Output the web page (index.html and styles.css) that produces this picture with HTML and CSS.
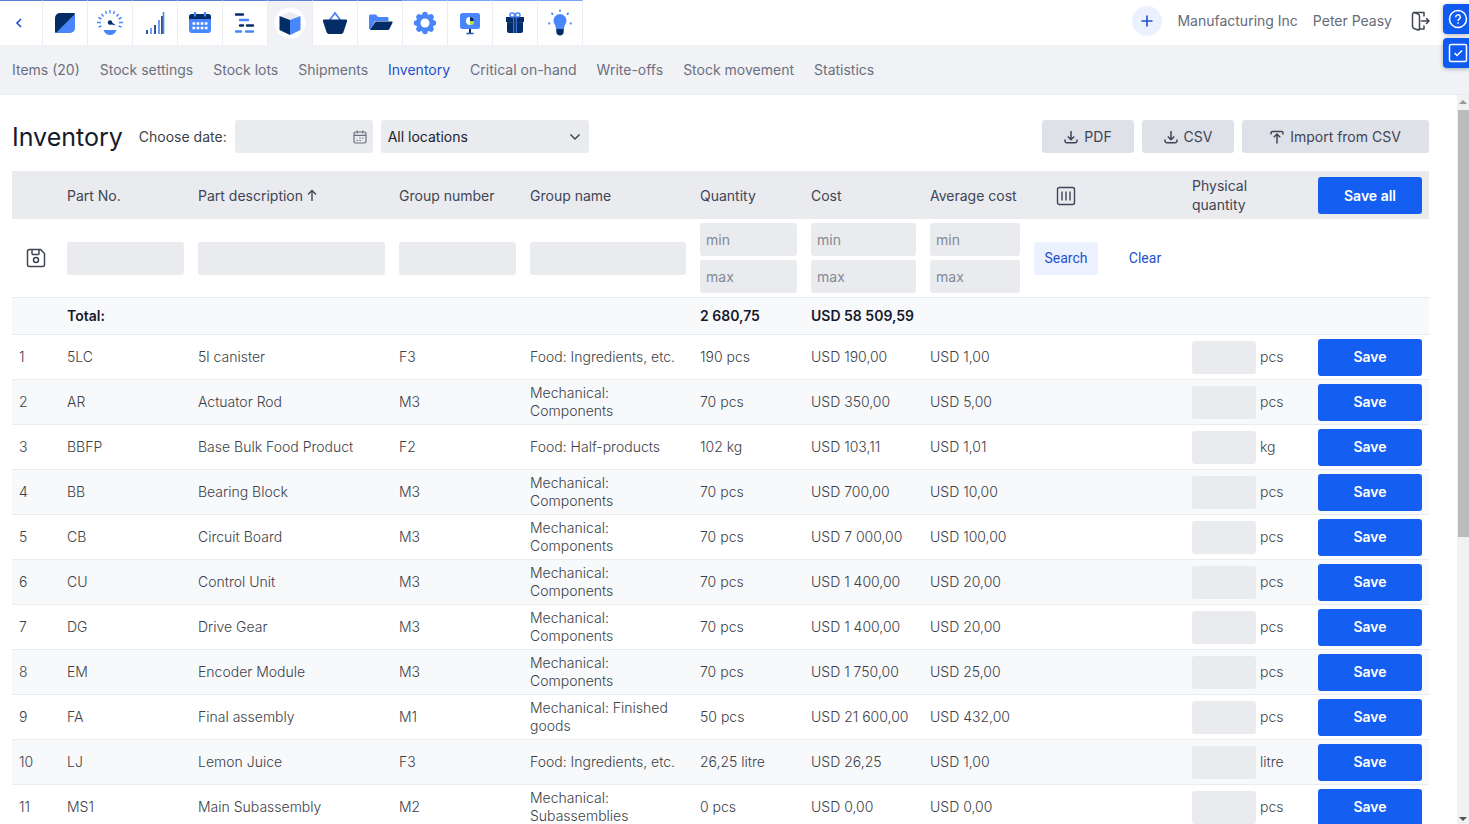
FILE: index.html
```html
<!DOCTYPE html>
<html lang="en">
<head>
<meta charset="utf-8">
<title>Inventory</title>
<link rel="stylesheet" href="styles.css">
</head>
<body>
<header class="topbar">
  <nav class="modules" aria-label="Modules">
    <a class="module back" href="#" aria-label="Back"><svg width="20" height="20" viewBox="0 0 20 20" fill="none" stroke="#1f4fd0" stroke-width="1.6"><path d="M12 6l-4 4 4 4"/></svg></a>
    <a class="module" href="#" aria-label="Dashboard"><svg width="26" height="26" viewBox="0 0 26 26"><path d="M8 3h13.500c1 0 1.500.5 1.500 1.500L4.500 23C3.500 23 3 22.500 3 21.500V8a5 5 0 0 1 5-5z" fill="#042c66"/><path d="M23 4v14a5 5 0 0 1-5 5H4z" fill="#4a86fb"/></svg></a>
    <a class="module" href="#" aria-label="Performance"><svg width="28" height="28" viewBox="0 0 28 28"><g stroke="#4a86fb" stroke-width="1.4"><path d="M14 1v3.500M9.500 2l1 3M18.500 2l-1 3M5.500 5l2 2.500M22.500 5l-2 2.500M2.500 8.500l3 1.500M25.500 8.500l-3 1.500M1 13.500h4M27 13.500h-4M2.500 18l3-1M25.500 18l-3-1"/></g><circle cx="14" cy="13.500" r="2.200" fill="#042c66"/><path d="M14 12l6 4.500-6.500-1.500z" fill="#042c66"/><path d="M7.500 21h13c-1 3-3.500 5-6.500 5s-5.500-2-6.500-5z" fill="#4a86fb"/></svg></a>
    <a class="module" href="#" aria-label="Sales"><svg width="24" height="26" viewBox="0 0 24 26"><g stroke-width="1.600"><path d="M4 20v4M12 15v9M19 6v18" stroke="#042c66"/><path d="M8 18v6M16 10v14M20.500 2v22" stroke="#4a86fb"/></g></svg></a>
    <a class="module" href="#" aria-label="Calendar"><svg width="26" height="26" viewBox="0 0 26 26"><rect x="2" y="4" width="22" height="19" rx="3" fill="#4a86fb"/><path d="M5 4h16a3 3 0 0 1 3 3v2H2V7a3 3 0 0 1 3-3z" fill="#042c66"/><path d="M8 2v4.500M18 2v4.500" stroke="#4a86fb" stroke-width="2.200"/><path d="M5.500 13.500h15M5.500 18h15" stroke="#fff" stroke-width="2.400" stroke-dasharray="2.700 1.400"/></svg></a>
    <a class="module" href="#" aria-label="Production"><svg width="26" height="26" viewBox="0 0 26 26"><g stroke-width="2.400" stroke-linecap="round"><path d="M4 4.500h7M8 15.500h3M15 15.500h6" stroke="#042c66"/><path d="M8 10h8M4 21.500h5M14 21.500h7" stroke="#4a86fb"/></g></svg></a>
    <a class="module active" href="#" aria-label="Stock"><svg width="32" height="32" viewBox="0 0 32 32"><circle cx="16" cy="16" r="15.500" fill="#fff"/><path d="M16 5l10 4-10 4L6 9z" fill="#e9ebf1"/><path d="M5.500 9L16 13v15L5.500 23z" fill="#042c66"/><path d="M26.500 9L16 13v15l10.500-5z" fill="#4a86fb"/></svg></a>
    <a class="module" href="#" aria-label="Procurement"><svg width="26" height="26" viewBox="0 0 26 26"><path d="M7 11l6-8 6 8" fill="none" stroke="#4a86fb" stroke-width="1.800"/><path d="M2 9.500h22c1 0 1.300 1 1 2l-3.500 10.500c-.5 1.500-1.500 2-3 2h-11c-1.500 0-2.500-.5-3-2L1 11.500c-.3-1 0-2 1-2z" fill="#042c66"/></svg></a>
    <a class="module" href="#" aria-label="Accounting"><svg width="26" height="26" viewBox="0 0 26 26"><path d="M2 19V6c0-1 .6-1.500 1.500-1.500H9L11 7h9c1 0 1.500.5 1.500 1.500V11H8l-4 8z" fill="#4a86fb"/><path d="M8.500 11.500h16c1 0 1.300.6 1 1.300l-3 6c-.5.900-1 1.200-2 1.200H3z" fill="#042c66"/></svg></a>
    <a class="module" href="#" aria-label="Settings"><svg width="26" height="26" viewBox="0 0 26 26"><g fill="#4a86fb"><circle cx="13" cy="13" r="9"/><g stroke="#4a86fb" stroke-width="5.500" stroke-linecap="round"><path d="M13 4.500v17M4.500 13h17M7 7l12 12M19 7L7 19"/></g></g><circle cx="13" cy="13" r="4.500" fill="#fff"/></svg></a>
    <a class="module" href="#" aria-label="Demo"><svg width="26" height="26" viewBox="0 0 26 26"><rect x="3" y="3" width="20" height="16" rx="2.500" fill="#4a86fb"/><circle cx="13" cy="11" r="4" fill="#fff"/><path d="M13 11V7a4 4 0 0 1 4 4z" fill="#042c66"/><path d="M13 11h4a4 4 0 0 1-4 4z" fill="#b5e04a"/><path d="M13 19v4" stroke="#042c66" stroke-width="2"/><path d="M9.500 23.500h7" stroke="#2c5fae" stroke-width="1.600"/></svg></a>
    <a class="module" href="#" aria-label="Gifts"><svg width="26" height="26" viewBox="0 0 26 26"><path d="M4 7h18v5H4zM5 12h16v9a2 2 0 0 1-2 2H7a2 2 0 0 1-2-2z" fill="#042c66"/><path d="M11.700 7v16M14.300 7v16" stroke="#4a86fb" stroke-width="1"/><path d="M5 12.500h16" stroke="#34507f" stroke-width=".7"/><rect x="8" y="3" width="4.500" height="4" rx="2" fill="none" stroke="#4a86fb" stroke-width="1.500"/><rect x="13.500" y="3" width="4.500" height="4" rx="2" fill="none" stroke="#4a86fb" stroke-width="1.500"/></svg></a>
    <a class="module" href="#" aria-label="Ideas"><svg width="26" height="28" viewBox="0 0 26 28"><path d="M13 5a6.500 6.500 0 0 1 6.500 6.500c0 3-2.500 4.500-2.500 9H9c0-4.500-2.500-6-2.500-9A6.500 6.500 0 0 1 13 5z" fill="#4a86fb"/><path d="M9.300 20h7.400v3c0 2-1.500 3.500-3.700 3.500S9.300 25 9.300 23z" fill="#042c66"/><g stroke="#4a86fb" stroke-width="1.800" stroke-linecap="round"><path d="M13 1.500v.5M5 4.500l.5.500M21 4.500l-.5.500M2 14.500h.5M24 14.500h-.5"/></g></svg></a>
  </nav>
  <div class="account">
    <button class="add" aria-label="Add"><svg width="14" height="14" viewBox="0 0 14 14" stroke="#1f4fd0" stroke-width="1.600"><path d="M7 1.500v11M1.500 7h11"/></svg></button>
    <a class="company" href="#">Manufacturing Inc</a>
    <a class="user" href="#">Peter Peasy</a>
    <a class="logout" href="#" aria-label="Log out"><svg width="20" height="20" viewBox="0 0 20 20" fill="none" stroke="#3f4555" stroke-width="1.500" stroke-linejoin="round" stroke-linecap="round"><path d="M3 1.500h10V5M13 15v3H8M1.500 3.500v12c0 1 .5 1.500 1.500 2l4 1.500c.8.300 1.500-.2 1.500-1V5c0-1-.4-1.500-1.300-1.900L3.500 1.700c-1.200-.4-2 .6-2 1.800zM10.500 10H18M15.500 7.500L18 10l-2.500 2.500"/></svg></a>
  </div>
</header>
<aside class="helpers">
  <button aria-label="Help"><svg width="20" height="20" viewBox="0 0 20 20" fill="none" stroke="#fff" stroke-width="1.500"><circle cx="10" cy="10" r="8.500"/><path d="M7.700 8.200a2.300 2.300 0 1 1 3.500 1.900c-.8.500-1.200.9-1.200 1.900M10 13.300v1.500"/></svg></button>
  <button aria-label="Tasks"><svg width="20" height="20" viewBox="0 0 20 20" fill="none" stroke="#fff" stroke-width="1.500"><rect x="1.500" y="1.500" width="17" height="17" rx="1.500"/><path d="M6.500 10l2.500 2.500 5-5"/></svg></button>
</aside>
<nav class="tabs" aria-label="Stock">
  <a href="#">Items (20)</a><a href="#">Stock settings</a><a href="#">Stock lots</a><a href="#">Shipments</a><a class="current" href="#">Inventory</a><a href="#">Critical on-hand</a><a href="#">Write-offs</a><a href="#">Stock movement</a><a href="#">Statistics</a>
</nav>
<div class="body">
<main>
  <div class="toolbar">
    <h1>Inventory</h1>
    <label for="date">Choose date:</label>
    <div class="datebox"><input id="date" type="text"><svg width="14" height="14" viewBox="0 0 14 14" fill="none" stroke="#6b7080" stroke-width="1.200"><rect x="1" y="2" width="12" height="11" rx="1.500"/><path d="M1 5.300h12M4.300.5v3M9.700.5v3M3.500 10.500h1.500M6.300 10.500h1.500M6.300 8h1.500M9 8h1.500"/></svg></div>
    <div class="selectbox"><select aria-label="Location"><option>All locations</option></select><svg width="12" height="8" viewBox="0 0 12 8" fill="none" stroke="#3f4555" stroke-width="1.500"><path d="M1.500 1.500L6 6l4.500-4.500"/></svg></div>
    <div class="exports">
      <button><svg width="14" height="14" viewBox="0 0 14 14" fill="none" stroke="#3f4555" stroke-width="1.500"><path d="M7 1v8.500M3.800 6.500L7 9.700l3.200-3.200M1 9.500v1.500c0 1 .6 1.700 1.700 1.700h8.600c1.100 0 1.700-.7 1.700-1.700V9.500"/></svg>PDF</button>
      <button><svg width="14" height="14" viewBox="0 0 14 14" fill="none" stroke="#3f4555" stroke-width="1.500"><path d="M7 1v8.500M3.800 6.500L7 9.700l3.200-3.200M1 9.500v1.500c0 1 .6 1.700 1.700 1.700h8.600c1.100 0 1.700-.7 1.700-1.700V9.500"/></svg>CSV</button>
      <button class="import"><svg width="14" height="14" viewBox="0 0 14 14" fill="none" stroke="#3f4555" stroke-width="1.500"><path d="M7 13.500V4M3.800 7.200L7 4l3.200 3.200M1 4.500V3c0-1 .5-1.500 1.500-1.500h9c1 0 1.500.5 1.500 1.500v1.500"/></svg>Import from CSV</button>
    </div>
  </div>
  <table>
    <colgroup><col class="c-num"><col class="c-part"><col class="c-desc"><col class="c-part"><col class="c-name"><col class="c-qty"><col class="c-cost"><col class="c-avg"><col class="c-search"><col class="c-clear"><col class="c-phys"><col class="c-save"></colgroup>
    <thead>
      <tr class="head"><th></th><th>Part No.</th><th>Part description <svg width="10" height="12" viewBox="0 0 10 12" fill="none" stroke="#3f4555" stroke-width="1.400"><path d="M5 12V1.500M1 5.500l4-4 4 4"/></svg></th><th>Group number</th><th>Group name</th><th>Quantity</th><th>Cost</th><th>Average cost</th><th class="center"><button class="plain" aria-label="Columns"><svg width="20" height="20" viewBox="0 0 20 20" fill="none" stroke="#3f4555" stroke-width="1.400"><rect x="1.500" y="1.500" width="17" height="17" rx="2"/><path d="M6 5.500v9M10 5.500v9M14 5.500v9"/></svg></button></th><th></th><th>Physical<br>quantity</th><th><button class="save">Save all</button></th></tr>
      <tr class="filter"><td class="center"><button class="plain" aria-label="Save filter"><svg width="20" height="20" viewBox="0 0 20 20" fill="none" stroke="#3f4555" stroke-width="1.500"><path d="M3.500 1.500h11l4 4v11c0 1.200-.8 2-2 2h-13c-1.200 0-2-.8-2-2v-13c0-1.200.8-2 2-2z"/><path d="M6 1.500v4c0 .6.400 1 1 1h5c.6 0 1-.4 1-1v-4"/><circle cx="10" cy="12" r="2.500"/></svg></button></td>
        <td><input aria-label="Part No."></td><td><input aria-label="Part description"></td><td><input aria-label="Group number"></td><td><input aria-label="Group name"></td>
        <td><input placeholder="min" aria-label="Quantity min"><input placeholder="max" aria-label="Quantity max"></td><td><input placeholder="min" aria-label="Cost min"><input placeholder="max" aria-label="Cost max"></td><td><input placeholder="min" aria-label="Average cost min"><input placeholder="max" aria-label="Average cost max"></td>
        <td><button class="search">Search</button></td><td class="center"><button class="clear">Clear</button></td><td></td><td></td></tr>
    </thead>
    <tbody>
      <tr class="total"><td></td><td>Total:</td><td></td><td></td><td></td><td>2 680,75</td><td>USD 58 509,59</td><td></td><td></td><td></td><td></td><td></td></tr>
      <tr><td>1</td><td>5LC</td><td>5l canister</td><td>F3</td><td>Food: Ingredients, etc.</td><td>190 pcs</td><td>USD 190,00</td><td>USD 1,00</td><td></td><td></td><td><label class="phys"><input>pcs</label></td><td><button class="save">Save</button></td></tr>
      <tr><td>2</td><td>AR</td><td>Actuator Rod</td><td>M3</td><td>Mechanical: Components</td><td>70 pcs</td><td>USD 350,00</td><td>USD 5,00</td><td></td><td></td><td><label class="phys"><input>pcs</label></td><td><button class="save">Save</button></td></tr>
      <tr><td>3</td><td>BBFP</td><td>Base Bulk Food Product</td><td>F2</td><td>Food: Half-products</td><td>102 kg</td><td>USD 103,11</td><td>USD 1,01</td><td></td><td></td><td><label class="phys"><input>kg</label></td><td><button class="save">Save</button></td></tr>
      <tr><td>4</td><td>BB</td><td>Bearing Block</td><td>M3</td><td>Mechanical: Components</td><td>70 pcs</td><td>USD 700,00</td><td>USD 10,00</td><td></td><td></td><td><label class="phys"><input>pcs</label></td><td><button class="save">Save</button></td></tr>
      <tr><td>5</td><td>CB</td><td>Circuit Board</td><td>M3</td><td>Mechanical: Components</td><td>70 pcs</td><td>USD 7 000,00</td><td>USD 100,00</td><td></td><td></td><td><label class="phys"><input>pcs</label></td><td><button class="save">Save</button></td></tr>
      <tr><td>6</td><td>CU</td><td>Control Unit</td><td>M3</td><td>Mechanical: Components</td><td>70 pcs</td><td>USD 1 400,00</td><td>USD 20,00</td><td></td><td></td><td><label class="phys"><input>pcs</label></td><td><button class="save">Save</button></td></tr>
      <tr><td>7</td><td>DG</td><td>Drive Gear</td><td>M3</td><td>Mechanical: Components</td><td>70 pcs</td><td>USD 1 400,00</td><td>USD 20,00</td><td></td><td></td><td><label class="phys"><input>pcs</label></td><td><button class="save">Save</button></td></tr>
      <tr><td>8</td><td>EM</td><td>Encoder Module</td><td>M3</td><td>Mechanical: Components</td><td>70 pcs</td><td>USD 1 750,00</td><td>USD 25,00</td><td></td><td></td><td><label class="phys"><input>pcs</label></td><td><button class="save">Save</button></td></tr>
      <tr><td>9</td><td>FA</td><td>Final assembly</td><td>M1</td><td>Mechanical: Finished goods</td><td>50 pcs</td><td>USD 21 600,00</td><td>USD 432,00</td><td></td><td></td><td><label class="phys"><input>pcs</label></td><td><button class="save">Save</button></td></tr>
      <tr><td>10</td><td>LJ</td><td>Lemon Juice</td><td>F3</td><td>Food: Ingredients, etc.</td><td>26,25 litre</td><td>USD 26,25</td><td>USD 1,00</td><td></td><td></td><td><label class="phys"><input>litre</label></td><td><button class="save">Save</button></td></tr>
      <tr><td>11</td><td>MS1</td><td>Main Subassembly</td><td>M2</td><td>Mechanical: Subassemblies</td><td>0 pcs</td><td>USD 0,00</td><td>USD 0,00</td><td></td><td></td><td><label class="phys"><input>pcs</label></td><td><button class="save">Save</button></td></tr>
    </tbody>
  </table>
</main>
<div class="scrollbar" aria-hidden="true"><i class="up"></i><div class="track"><div class="thumb"></div></div><i class="down"></i></div>
</div>
</body>
</html>
```
FILE: styles.css
```css
* { box-sizing: border-box; }
body { margin: 0; height: 100vh; overflow: hidden; display: flex; flex-direction: column; background: #fff; color: #3c3f48; font: 14px/18px Inter, "Open Sans", sans-serif; }
a { color: inherit; text-decoration: none; }
button, input, select { font: inherit; color: inherit; border: 0; margin: 0; border-radius: 3px; }
button { cursor: pointer; }
svg { display: block; flex: none; }

.topbar { display: flex; justify-content: space-between; flex: none; height: 45px; }
.modules { display: flex; }
.module { display: flex; align-items: center; justify-content: center; width: 45px; border-top: 1px solid #5c80d8; border-right: 1px solid #eceef2; }
.module.back { width: 43px; padding-right: 4px; }
.module:nth-child(n+10) { border-top-color: #78a3fa; }
.module.active { background: #f1f2f5; }
.account { display: flex; align-items: center; gap: 15px; padding: 0 38px 3px 0; color: #666b7a; }
.add { display: flex; align-items: center; justify-content: center; width: 30px; height: 30px; padding: 0; border-radius: 50%; background: #ebf1ff; }
.logout { margin-left: 4px; }

.helpers { position: absolute; top: 4px; right: 0; display: flex; flex-direction: column; gap: 4px; }
.helpers button { width: 26px; height: 30px; padding: 0 0 0 5px; border-radius: 4px 0 0 4px; background: #0f5bf2; box-shadow: 0 1px 4px rgba(0, 0, 0, .3); }

.tabs { display: flex; align-items: center; gap: 20px; flex: none; height: 50px; padding: 0 12px; background: #f1f2f5; border-bottom: 1px solid #eaebee; color: #6b7080; }
.tabs .current { color: #1f4fd0; }

.body { display: flex; flex: 1; min-height: 0; }
main { flex: 1; padding: 25px 28px 0 12px; overflow: hidden; }
.toolbar { display: flex; align-items: center; gap: 8px; height: 33px; margin-bottom: 18px; }
h1 { margin: 0 8px 0 0; font-size: 25px; line-height: 32px; font-weight: 400; color: #171a2b; }
input, select, .datebox { height: 33px; background: #e9ebef; }
.datebox { display: flex; align-items: center; width: 138px; padding-right: 6px; border-radius: 3px; }
.datebox input { width: 100%; min-width: 0; background: none; }
.selectbox { display: grid; align-items: center; width: 208px; color: #20232d; }
.selectbox > * { grid-area: 1 / 1; }
.selectbox select { width: 100%; padding: 0 7px; appearance: none; }
.selectbox svg { justify-self: end; margin-right: 8px; pointer-events: none; }
.exports { display: flex; gap: 8px; margin-left: auto; }
.exports button { display: flex; align-items: center; justify-content: center; gap: 6px; width: 92px; height: 33px; padding: 0; background: #dfe1e9; color: #3f4555; }
.exports .import { width: 187px; }

table { width: 100%; table-layout: fixed; border-collapse: separate; border-spacing: 0; }
.c-num { width: 48px; }
.c-part { width: 131px; }
.c-desc { width: 201px; }
.c-name { width: 170px; }
.c-qty { width: 111px; }
.c-cost { width: 119px; }
.c-avg { width: 104px; }
.c-search { width: 78px; }
.c-clear { width: 80px; }
.c-phys { width: 126px; }
.c-save { width: 118px; }
th, td { padding: 0 7px; text-align: left; font-weight: 300; vertical-align: middle; }
th { height: 48px; background: #e9ebef; color: #3f4555; font-weight: 400; line-height: 19px; white-space: nowrap; }
th svg { display: inline; }
.center { text-align: center; }
.plain { padding: 0; background: none; vertical-align: middle; }
.plain svg { display: block; }
.filter td { height: 78px; padding: 4px 7px; }
.filter input { display: block; width: 100%; padding: 0 6px; font-weight: 400; }
.filter input + input { margin-top: 4px; }
.filter input::placeholder { color: #858995; opacity: 1; }
.search, .clear { height: 33px; padding: 0; font-family: Roboto, sans-serif; font-weight: 400; color: #1f4fd0; }
.search { width: 64px; background: #ebf1ff; }
.clear { background: none; }
tbody td { height: 45px; border-top: 1px solid #e9ebef; }
tbody tr:nth-child(odd) td { background: #f8f9fb; }
tbody .total td { height: 37px; font-weight: 600; color: #171a2b; }
.phys { display: flex; align-items: center; gap: 4px; }
.phys input { width: 64px; padding: 0 6px; }
.save { display: block; width: 100%; height: 37px; padding: 0; background: #145ff2; color: #fff; font-weight: 600; }

.scrollbar { display: flex; flex-direction: column; align-items: center; justify-content: space-between; width: 12px; padding: 5px 0 3px; background: #f1f1f1; }
.track { flex: 1; width: 100%; margin: 6px 0 7px; padding-left: 1px; }
.thumb { height: 61%; background: #bcbcbc; }
.up, .down { border: 4px solid transparent; border-top: 0; border-bottom: 4px solid #999; }
.down { border-top: 4px solid #555; border-bottom: 0; }
```
